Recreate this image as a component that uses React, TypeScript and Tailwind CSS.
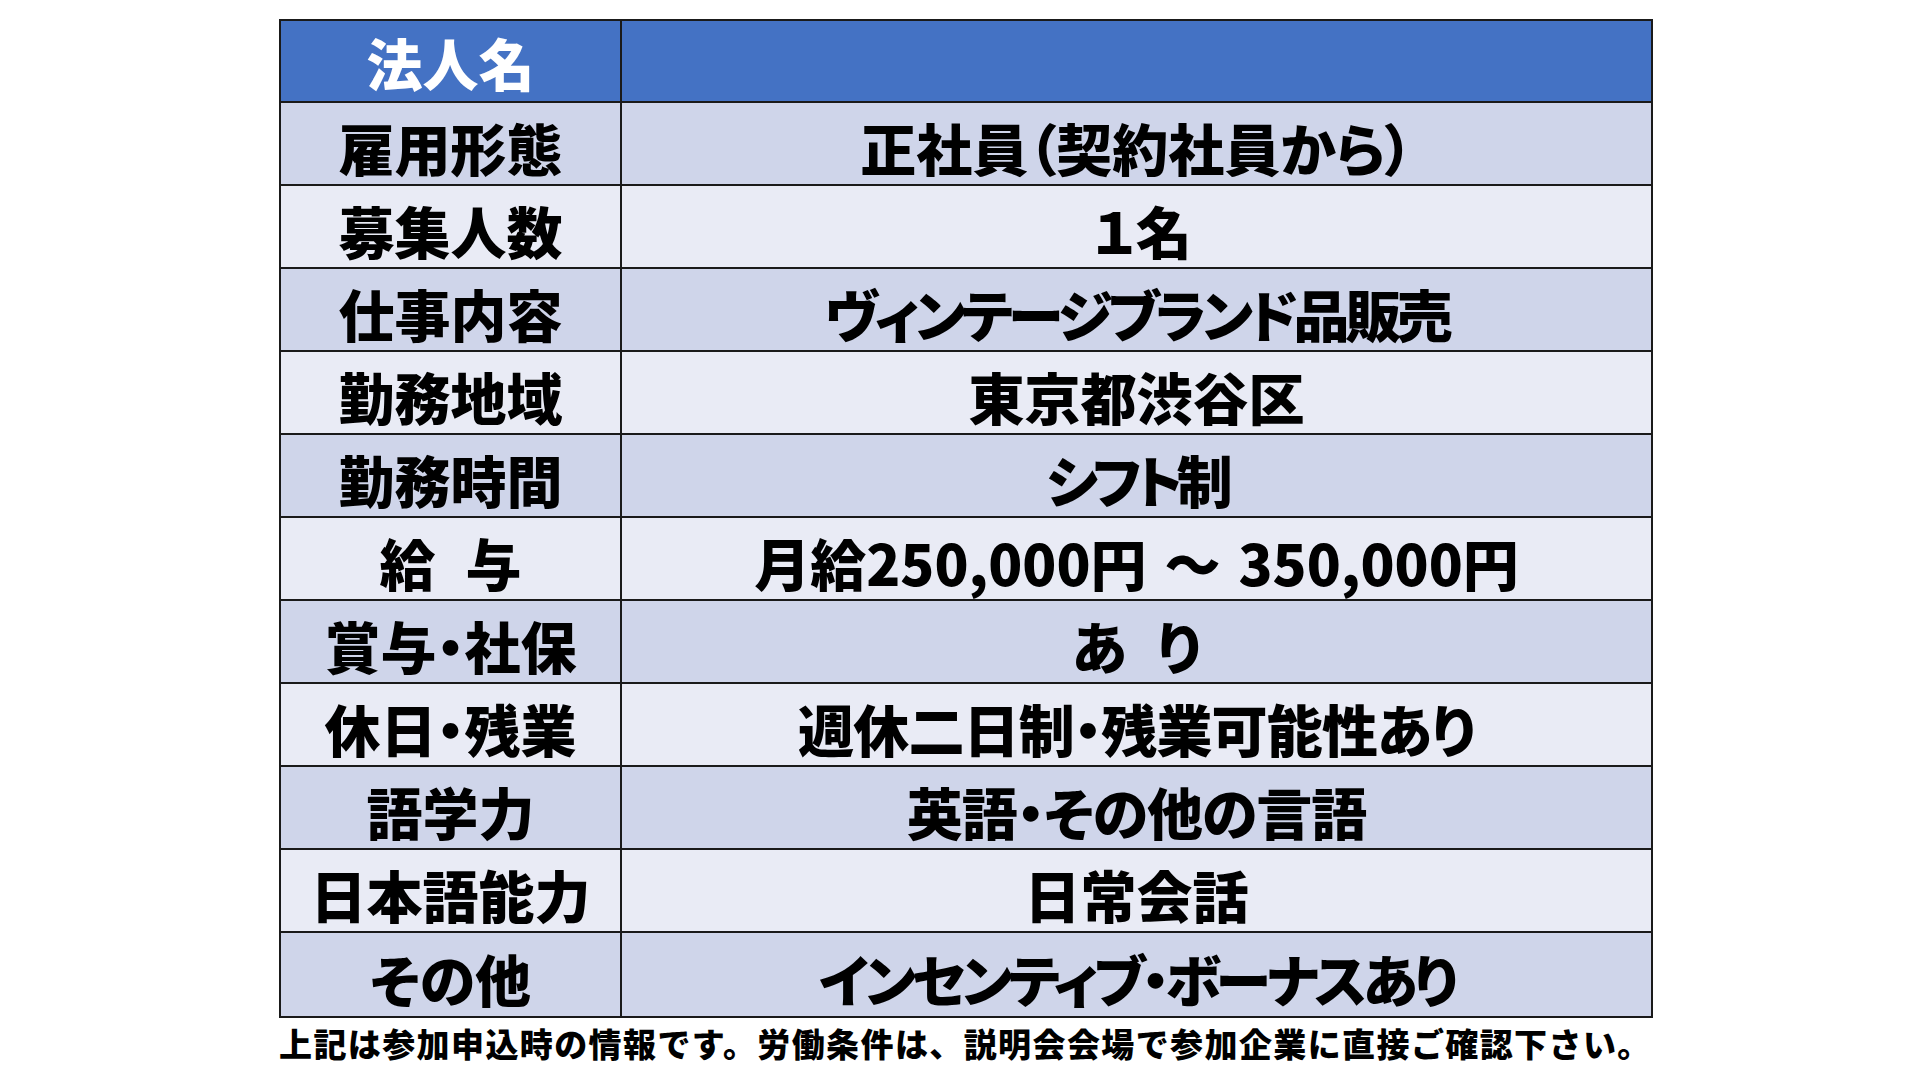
import React from "react";

type Row = { k: React.ReactNode; v: React.ReactNode; vc?: string };

const Gap = () => <span className="inline-block w-[30px]" />;

const rows: Row[] = [
  { k: "雇用形態", v: "正社員（契約社員から）" },
  { k: "募集人数", v: <>１<span className="inline-block w-[4px]" />名</>, vc: "tracking-[-4px] pl-[8px]" },
  { k: "仕事内容", v: "ヴィンテージブランド品販売", vc: "tracking-[-4.4px]" },
  { k: "勤務地域", v: "東京都渋谷区" },
  { k: "勤務時間", v: "シフト制", vc: "tracking-[-5.8px]" },
  { k: <>給<Gap />与</>, v: <>月給250,000円<span className="inline-block w-[18px]" />～<span className="inline-block w-[18px]" />350,000円</> },
  { k: "賞与・社保", v: <>あ<Gap />り</> },
  { k: "休日・残業", v: "週休二日制・残業可能性あり", vc: "tracking-[-0.8px]" },
  { k: "語学力", v: "英語・その他の言語", vc: "tracking-[-1px]" },
  { k: "日本語能力", v: "日常会話" },
  { k: "その他", v: "インセンティブ・ボーナスあり", vc: "tracking-[-4.1px]" },
];

export default function App() {
  return (
    <div className="w-[1920px] h-[1080px] bg-white overflow-hidden font-['Noto_Sans_CJK_JP','Noto_Sans_CJK_SC',sans-serif]">
      <div className="pl-[279px] pt-[19px]">
        <div className="w-[1374px] border-2 border-[#1a1a1a] grid grid-cols-[341px_1fr] [font-feature-settings:'palt']">
          <div className="h-[82px] bg-[#4472C4] border-r-2 border-b-2 border-[#1a1a1a] flex items-center justify-center text-white text-[56px] font-black leading-none pt-[2px]">
            法人名
          </div>
          <div className="h-[82px] bg-[#4472C4] border-b-2 border-[#1a1a1a]" />
          {rows.map((r, i) => {
            const last = i === rows.length - 1;
            const bg = i % 2 === 0 ? "bg-[#CFD5EA]" : "bg-[#E9EBF5]";
            return (
              <React.Fragment key={i}>
                <div
                  className={`${bg} h-[83px] border-r-2 border-[#1a1a1a] ${last ? "h-[81px]" : "border-b-2"} flex items-center justify-center text-black text-[56px] font-black leading-none pt-[6px] whitespace-pre`}
                >
                  {r.k}
                </div>
                <div
                  className={`${bg} h-[83px] border-[#1a1a1a] ${last ? "h-[81px]" : "border-b-2"} flex items-center justify-center text-black text-[56px] font-black leading-none pt-[6px] whitespace-pre ${r.vc ?? ""}`}
                >
                  {r.v}
                </div>
              </React.Fragment>
            );
          })}
        </div>
        <div className="mt-[9px] text-[33px] font-black leading-none text-black whitespace-nowrap tracking-[1.4px]">
          上記は参加申込時の情報です。労働条件は、説明会会場で参加企業に直接ご確認下さい。
        </div>
      </div>
    </div>
  );
}
